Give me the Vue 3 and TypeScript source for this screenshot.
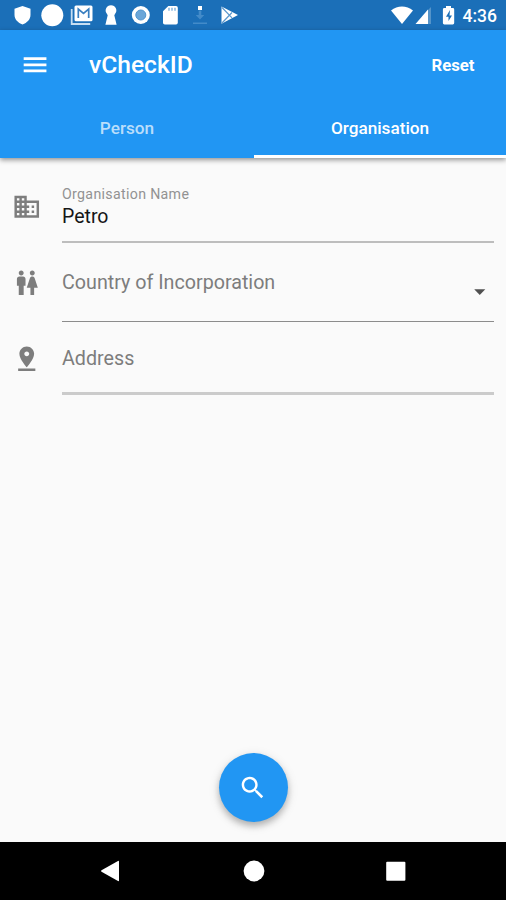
<script setup lang="ts">
import { ref } from 'vue'

const tabs = ['Person', 'Organisation']
const activeTab = ref(1)
const organisation = ref('Petro')
</script>

<template>
  <div class="screen">
    <header class="status">
      <svg class="notifications" viewBox="0 0 250 30" fill="#fff">
        <path d="M22.500 6 30.500 8.800v6c0 4.700-3.400 8-8 9.700C17.900 22.800 14.500 19.500 14.500 14.800v-6z" />
        <circle cx="52.300" cy="15.200" r="11" />
        <path d="M71.700 9v15h18.500" fill="none" stroke="#c6def2" stroke-width="1.800" />
        <rect x="74.500" y="5.500" width="18" height="15.800" rx="1.500" />
        <path d="M78.300 18V9l5.200 4.500L88.700 9v9" fill="none" stroke="#3a7fc0" stroke-width="1.700" />
        <path d="M111 5.200a5.300 5.300 0 0 1 4 8.800l-.7 1.300 2.300 9.500h-11.200l2.300-9.500-.7-1.300A5.300 5.300 0 0 1 111 5.200z" />
        <circle cx="140.800" cy="15" r="9" />
        <circle cx="140.800" cy="15" r="5" fill="#6ba6d8" stroke="#5095cf" />
        <path d="M168.300 6H176q1.800 0 1.800 1.800v15q0 1.800-1.800 1.800h-11.200q-1.800 0-1.800-1.800V11.300z" />
        <path d="M169 7.800v3M172 7.800v3M175 7.800v3" stroke="#6ba6d8" stroke-width="1.200" />
        <path d="M198 6h4v4h-4z" />
        <path d="M198.700 10.500h2.600V15h3l-4.300 4.500-4.300-4.500h3zM193 22.500h14V24h-14z" fill="#438bc9" />
        <path d="M221.500 6.500 238 15l-16.500 8.800z" />
        <path d="m222 7.500 10 10.300M222 23l10-10.500" fill="none" stroke="#5b98cd" stroke-width="1.200" />
      </svg>
      <svg class="system" viewBox="0 0 70 30" fill="#fff">
        <path d="M4 10.500C10.500 5 19.500 5 26 10.500L15 24z" />
        <path d="M44 7v17h-4V11z" fill="#5594c9" />
        <path d="M41 9.500V24H28.500z" />
        <path d="M59 6h5v2h1.800q1.400 0 1.400 1.400v13.700q0 1.400-1.400 1.400h-8.500q-1.400 0-1.400-1.400V9.400Q55.900 8 57.300 8H59z" />
        <path d="m63 10-4 6.700h2.500V21l3.500-5.500h-2.500z" fill="#1b6fb8" />
      </svg>
      <span class="clock">4:36</span>
    </header>

    <div class="appbar">
      <div class="toolbar">
        <svg class="icon menu" viewBox="0 0 24 24"><path d="M3 18.200h18.500v-2.300H3v2.300zm0-5h18.500v-2.300H3v2.300zm0-7.400v2.300h18.500V5.800H3z" /></svg>
        <h1>vCheckID</h1>
        <button class="reset" @click="organisation = ''">Reset</button>
      </div>
      <nav class="tabs">
        <button
          v-for="(tab, i) in tabs"
          :key="tab"
          :class="{ active: i === activeTab }"
          @click="activeTab = i"
        >{{ tab }}</button>
      </nav>
    </div>

    <main>
      <div class="row name">
        <svg class="icon" viewBox="0 0 24 24"><path d="M12 7V3H2v18h20V7H12zM6 19H4v-2h2v2zm0-4H4v-2h2v2zm0-4H4V9h2v2zm0-4H4V5h2v2zm4 12H8v-2h2v2zm0-4H8v-2h2v2zm0-4H8V9h2v2zm0-4H8V5h2v2zm10 12h-8v-2h2v-2h-2v-2h2v-2h-2V9h8v10zm-2-8h-2v2h2v-2zm0 4h-2v2h2v-2z" /></svg>
        <div class="field">
          <small>Organisation Name</small>
          <span class="value">{{ organisation }}</span>
        </div>
      </div>
      <div class="row country">
        <svg class="icon" viewBox="0 0 24 24"><path d="M5.500 22v-7.500H4V9c0-1.100.9-2 2-2h3c1.100 0 2 .9 2 2v5.500H9.500V22h-4zM18 22v-6h3l-2.540-7.630C18.180 7.550 17.420 7 16.560 7h-.12c-.86 0-1.630.55-1.900 1.370L12 16h3v6h3zM7.500 6c1.110 0 2-.89 2-2s-.89-2-2-2-2 .89-2 2 .89 2 2 2zm9 0c1.110 0 2-.89 2-2s-.89-2-2-2-2 .89-2 2 .89 2 2 2z" /></svg>
        <div class="field">
          <span class="hint">Country of Incorporation</span>
          <svg class="icon arrow" viewBox="0 0 24 24"><path d="m7.500 10 4.500 4.600 4.500-4.600z" /></svg>
        </div>
      </div>
      <div class="row address">
        <svg class="icon" viewBox="0 0 24 24"><path d="M18 8c0-3.310-2.690-6-6-6S6 4.690 6 8c0 4.500 6 11 6 11s6-6.500 6-11zm-8 0c0-1.100.9-2 2-2s2 .9 2 2-.89 2-2 2c-1.100 0-2-.9-2-2zM5 20v2h14v-2H5z" /></svg>
        <div class="field"><span class="hint">Address</span></div>
      </div>
    </main>

    <button class="fab" aria-label="Search">
      <svg class="icon" viewBox="0 0 24 24"><path d="M15.500 14h-.79l-.28-.27C15.410 12.590 16 11.110 16 9.500 16 5.910 13.090 3 9.500 3S3 5.910 3 9.500 5.910 16 9.500 16c1.610 0 3.090-.59 4.230-1.570l.27.28v.79l5 4.990L20.490 19l-4.990-5zm-6 0C7.010 14 5 11.990 5 9.500S7.010 5 9.500 5 14 7.010 14 9.500 11.990 14 9.500 14z" /></svg>
    </button>

    <footer>
      <svg viewBox="0 0 24 24"><path d="M20 2.500v19q0 1-1 .5L2.500 12.700q-1-.7 0-1.400L19 2q1-.5 1 .5z" /></svg>
      <svg viewBox="0 0 24 24"><circle cx="12" cy="12" r="10.400" /></svg>
      <svg viewBox="0 0 24 24"><rect x="2.200" y="2.700" width="19.200" height="19" rx="1" /></svg>
    </footer>
  </div>
</template>

<style>
body { margin: 0; }
</style>

<style scoped>
.screen {
  width: 506px;
  height: 900px;
  display: flex;
  flex-direction: column;
  overflow: hidden;
  background: #fafafa;
  font-family: Roboto, sans-serif;
}
button {
  padding: 0;
  border: 0;
  background: none;
  color: inherit;
  font: inherit;
}
.icon { width: 29.5px; height: 29.5px; flex: none; fill: currentColor; }
.status {
  display: flex;
  height: 30px;
  flex: none;
  align-items: center;
  background: #1b6fb8;
  color: #fff;
}
.notifications { width: 250px; height: 30px; }
.system { width: 70px; height: 30px; margin-left: 137px; }
.clock { margin: 2px 0 0 5.5px; font-size: 17.5px; font-weight: 500; line-height: 28px; }
.appbar {
  flex: none;
  height: 128px;
  background: #2196f3;
  color: #fff;
  box-shadow: 0 2px 5px rgba(0, 0, 0, 0.42);
}
.toolbar { display: flex; height: 70px; align-items: center; padding: 0 31.5px 0 20px; }
.toolbar h1 { flex: 1; margin: 0 0 0 39.5px; font-size: 24.6px; font-weight: 500; line-height: 30px; }
.reset { font-size: 16.7px; font-weight: 700; }
.tabs { display: grid; grid-template-columns: 254px 1fr; height: 58px; }
.tabs button {
  border-bottom: 3px solid transparent;
  color: rgba(255, 255, 255, 0.7);
  font-size: 17.2px;
  font-weight: 500;
}
.tabs .active { border-color: #fff; color: #fff; }
main { flex: 1; padding: 17px 12px 0; color: #7d7d7d; }
.row { display: flex; }
.row .icon { margin-right: 20.5px; }
.field { flex: 1; box-sizing: border-box; border-bottom: 2px solid #bdbdbd; display: flex; }
.name .icon { margin-top: 17px; }
.name .field { height: 68px; flex-direction: column; padding-top: 10px; }
.name small { font-size: 14.2px; line-height: 18px; letter-spacing: 0.32px; color: #929292; }
.value { font-size: 19.5px; line-height: 27px; color: #161616; }
.country .icon { margin-top: 25px; }
.country .field { height: 79px; border-bottom: 1.5px solid #8c8c8c; justify-content: space-between; padding-top: 26px; }
.country .arrow { margin: 8px 0 0; color: #505050; }
.hint { font-size: 19.7px; line-height: 28px; }
.address .icon { margin-top: 21.5px; }
.address .field { height: 73px; border-bottom: 3px solid #cbcbcb; padding-top: 23px; }
.fab {
  align-self: center;
  display: flex;
  align-items: center;
  justify-content: center;
  flex: none;
  width: 69px;
  height: 69px;
  margin-bottom: 20px;
  border-radius: 50%;
  background: #2196f3;
  color: #fff;
  box-shadow: 0 4px 6px rgba(0, 0, 0, 0.22), 0 3px 12px rgba(0, 0, 0, 0.12);
}
footer {
  display: grid;
  grid-template-columns: repeat(3, 142.5px);
  justify-content: center;
  justify-items: center;
  align-items: center;
  height: 58px;
  flex: none;
  padding-left: 1px;
  background: #000;
}
footer svg { width: 24px; height: 24px; fill: #fff; }
</style>
